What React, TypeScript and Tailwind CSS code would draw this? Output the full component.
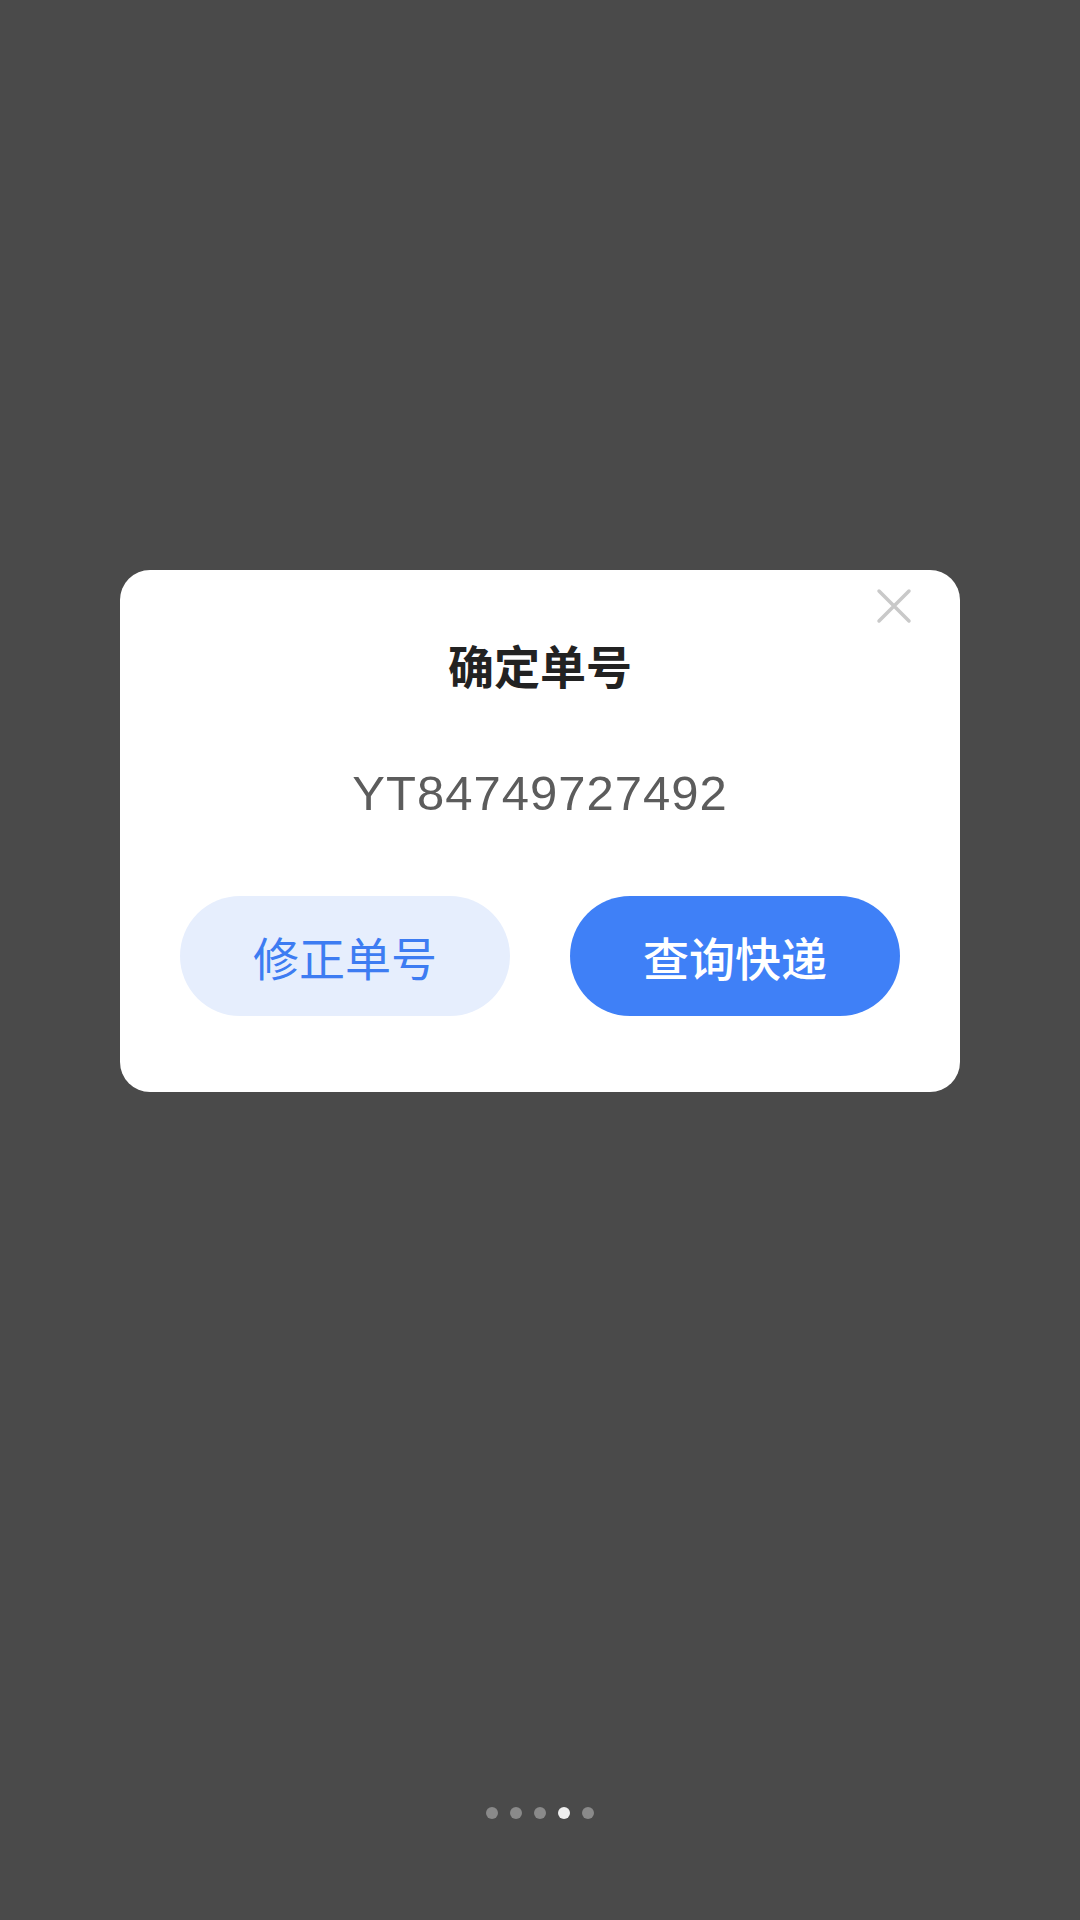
import React from "react";

const dots = [false, false, false, true, false];

export default function App() {
    return (
        <div className="w-[1080px] h-[1920px] bg-[#4a4a4a] flex flex-col items-center font-['Liberation_Sans','Noto_Sans_CJK_SC',sans-serif]">
            {/* Dialog */}
            <div className="relative mt-[570px] w-[840px] h-[522px] bg-white rounded-[30px] flex flex-col items-center pt-[66px]">
                <button className="absolute top-[17px] right-[47px] w-[38px] h-[38px] flex items-center justify-center">
                    <svg width="38" height="38" viewBox="0 0 38 38" fill="none">
                        <path d="M4 4L34 34M34 4L4 34" stroke="#c9c9c9" strokeWidth="3.5" strokeLinecap="round" />
                    </svg>
                </button>
                <p className="text-[46px] leading-[56px] font-semibold text-[#222222] font-['Noto_Sans_CJK_SC',sans-serif]">
                    确定单号
                </p>
                <p className="mt-[71px] text-[49px] leading-[60px] tracking-[1px] text-[#5c5c5c]">
                    YT84749727492
                </p>
                <div className="mt-[73px] flex gap-[60px]">
                    <button className="w-[330px] h-[120px] rounded-full bg-[#e6eefd] text-[#3d7cf2] text-[46px] font-['Noto_Sans_CJK_SC',sans-serif]">
                        修正单号
                    </button>
                    <button className="w-[330px] h-[120px] rounded-full bg-[#3f80f7] text-white text-[46px] font-medium font-['Noto_Sans_CJK_SC',sans-serif]">
                        查询快递
                    </button>
                </div>
            </div>

            {/* Page indicator */}
            <div className="mt-auto mb-[101px] flex gap-[12px]">
                {dots.map((active, i) => (
                    <span
                        key={i}
                        className={active ? "w-[12px] h-[12px] rounded-full bg-[#efefef]" : "w-[12px] h-[12px] rounded-full bg-[#8a8a8a]"}
                    />
                ))}
            </div>
        </div>
    );
}
